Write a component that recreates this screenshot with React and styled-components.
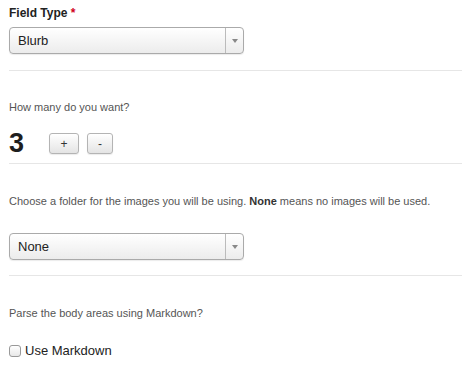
import React from 'react'
import styled, { createGlobalStyle } from 'styled-components'

const GlobalStyle = createGlobalStyle`
  body {
    margin: 0;
    background: #fff;
    font-family: "Liberation Sans", Arial, sans-serif;
    color: #333;
  }
`

const Form = styled.div`
  padding-left: 9px;
  width: 453px;
`

const Section = styled.div`
  padding-top: ${p => p.top}px;
  padding-bottom: ${p => p.bottom}px;
  border-bottom: ${p => (p.last ? 'none' : '1px solid #e6e6e6')};
`

const Label = styled.div`
  font-size: 12px;
  font-weight: bold;
  line-height: 15px;
  color: #222;
  margin-bottom: 6px;

  span {
    color: #d0021b;
  }
`

const Hint = styled.p`
  margin: 0 0 ${p => p.gap}px;
  font-size: 11px;
  line-height: 14px;
  color: #555;

  b {
    color: #333;
  }
`

const SelectBox = styled.div`
  width: 233px;
  height: 25px;
  display: flex;
  align-items: stretch;
  border: 1px solid #aaa;
  border-radius: 4px;
  background: linear-gradient(#ffffff, #ececec);
  box-shadow: 0 1px 1px rgba(0, 0, 0, 0.08);
`

const SelectValue = styled.div`
  flex: 1;
  display: flex;
  align-items: center;
  padding-left: 8px;
  font-size: 13px;
  color: #222;
`

const SelectArrow = styled.div`
  width: 17px;
  border-left: 1px solid #bbb;
  display: flex;
  align-items: center;
  justify-content: center;

  &::after {
    content: '';
    border-left: 3px solid transparent;
    border-right: 3px solid transparent;
    border-top: 4px solid #888;
  }
`

const CountRow = styled.div`
  display: flex;
  align-items: center;
  height: 21px;
`

const Count = styled.div`
  font-size: 27px;
  font-weight: bold;
  color: #1e1e1e;
  width: 40px;
  line-height: 21px;
`

const StepButton = styled.button`
  width: ${p => p.w}px;
  height: 21px;
  margin-right: 8px;
  padding: 0;
  font-family: "Liberation Sans", Arial, sans-serif;
  font-size: 12px;
  color: #333;
  border: 1px solid #b4b4b4;
  border-radius: 3px;
  background: linear-gradient(#ffffff, #e4e4e4);
  box-shadow: 0 1px 1px rgba(0, 0, 0, 0.08);
`

const CheckRow = styled.label`
  display: flex;
  align-items: center;
  gap: 4px;
  font-size: 13px;
  color: #222;
  line-height: 16px;
`

const Box = styled.span`
  width: 10px;
  height: 10px;
  border: 1px solid #999;
  border-radius: 3px;
  background: linear-gradient(#ffffff, #e8e8e8);
`

const Select = ({ value }) => (
  <SelectBox>
    <SelectValue>{value}</SelectValue>
    <SelectArrow />
  </SelectBox>
)

export default function App() {
  return (
    <>
      <GlobalStyle />
      <Form>
        <Section top={6} bottom={16}>
          <Label>
            Field Type <span>*</span>
          </Label>
          <Select value="Blurb" />
        </Section>
        <Section top={29} bottom={9}>
          <Hint gap={19}>How many do you want?</Hint>
          <CountRow>
            <Count>3</Count>
            <StepButton w={30}>+</StepButton>
            <StepButton w={26}>-</StepButton>
          </CountRow>
        </Section>
        <Section top={30} bottom={15}>
          <Hint gap={25}>
            Choose a folder for the images you will be using. <b>None</b> means no images will be used.
          </Hint>
          <Select value="None" />
        </Section>
        <Section top={30} bottom={0} last>
          <Hint gap={23}>Parse the body areas using Markdown?</Hint>
          <CheckRow>
            <Box />
            Use Markdown
          </CheckRow>
        </Section>
      </Form>
    </>
  )
}
